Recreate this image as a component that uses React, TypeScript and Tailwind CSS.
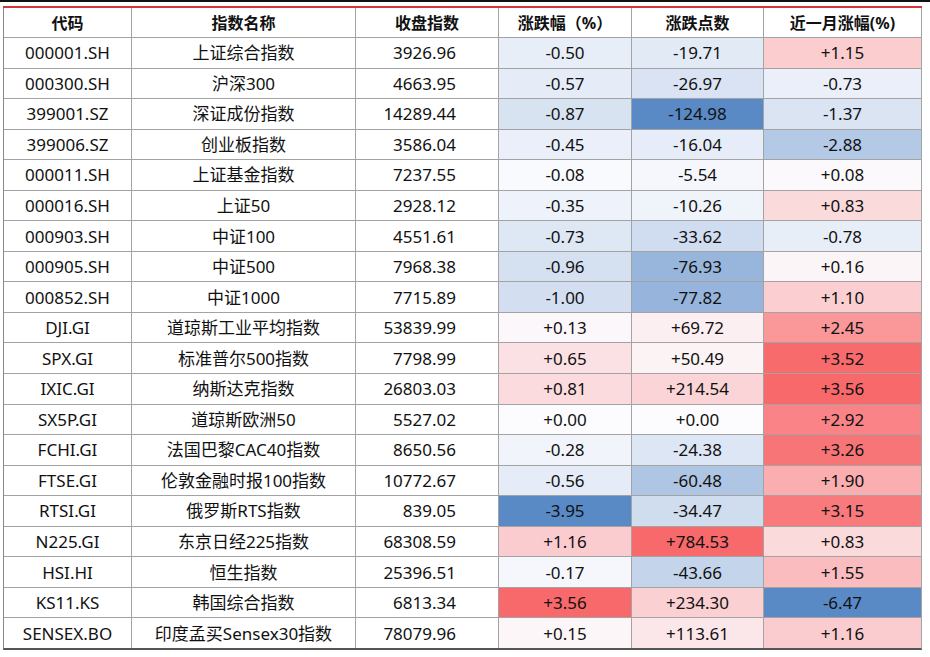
import React from "react";

type Row = [string, string, string, number, number, number];

const rows: Row[] = [
  ["000001.SH", "上证综合指数", "3926.96", -0.5, -19.71, 1.15],
  ["000300.SH", "沪深300", "4663.95", -0.57, -26.97, -0.73],
  ["399001.SZ", "深证成份指数", "14289.44", -0.87, -124.98, -1.37],
  ["399006.SZ", "创业板指数", "3586.04", -0.45, -16.04, -2.88],
  ["000011.SH", "上证基金指数", "7237.55", -0.08, -5.54, 0.08],
  ["000016.SH", "上证50", "2928.12", -0.35, -10.26, 0.83],
  ["000903.SH", "中证100", "4551.61", -0.73, -33.62, -0.78],
  ["000905.SH", "中证500", "7968.38", -0.96, -76.93, 0.16],
  ["000852.SH", "中证1000", "7715.89", -1.0, -77.82, 1.1],
  ["DJI.GI", "道琼斯工业平均指数", "53839.99", 0.13, 69.72, 2.45],
  ["SPX.GI", "标准普尔500指数", "7798.99", 0.65, 50.49, 3.52],
  ["IXIC.GI", "纳斯达克指数", "26803.03", 0.81, 214.54, 3.56],
  ["SX5P.GI", "道琼斯欧洲50", "5527.02", 0.0, 0.0, 2.92],
  ["FCHI.GI", "法国巴黎CAC40指数", "8650.56", -0.28, -24.38, 3.26],
  ["FTSE.GI", "伦敦金融时报100指数", "10772.67", -0.56, -60.48, 1.9],
  ["RTSI.GI", "俄罗斯RTS指数", "839.05", -3.95, -34.47, 3.15],
  ["N225.GI", "东京日经225指数", "68308.59", 1.16, 784.53, 0.83],
  ["HSI.HI", "恒生指数", "25396.51", -0.17, -43.66, 1.55],
  ["KS11.KS", "韩国综合指数", "6813.34", 3.56, 234.3, -6.47],
  ["SENSEX.BO", "印度孟买Sensex30指数", "78079.96", 0.15, 113.61, 1.16],
];

const MIN = [90, 138, 198];
const MID = [252, 252, 255];
const MAX = [248, 105, 107];

function heat(v: number, lo: number, hi: number): string {
  let t = 0;
  let target = MID;
  if (v < 0) {
    t = v / lo;
    target = MIN;
  } else if (v > 0) {
    t = v / hi;
    target = MAX;
  }
  const c = MID.map((m, i) => Math.round(m + (target[i] - m) * t));
  return `rgb(${c[0]},${c[1]},${c[2]})`;
}

function fmt(v: number): string {
  return (v >= 0 ? "+" : "") + v.toFixed(2);
}

const cols = [3, 4, 5] as const;
const ranges = cols.map((ci) => {
  const vals = rows.map((r) => r[ci] as number);
  return [Math.min(...vals), Math.max(...vals)];
});

const headers = ["代码", "指数名称", "收盘指数", "涨跌幅（%）", "涨跌点数", "近一月涨幅(%)"];

export default function App() {
  return (
    <div
      className="w-[930px] h-[657px] bg-white overflow-hidden text-[#111]"
      style={{ fontFamily: '"Noto Sans", "Noto Sans CJK SC", sans-serif' }}
    >
      <div className="h-[2px] bg-[#111]" />
      <div className="ml-[3px] mt-[4px] w-[919px]">
        <div className="h-[2px] bg-[#d6333e]" />
        <div className="grid grid-cols-[127px_223px_142px_132px_131px_157px] grid-rows-[29px_repeat(20,29.56px)] gap-px bg-[#a3a3a3] border-l border-r border-l-[#8a8a8a] border-r-[#a3a3a3] border-b-2 border-b-[#555]">
          {headers.map((h) => (
            <div key={h} className="bg-white flex items-center justify-center font-bold text-[16px] leading-none">
              {h}
            </div>
          ))}
          {rows.map((r) => (
            <React.Fragment key={r[0]}>
              <div className="bg-white flex items-center justify-center text-[17px] leading-none">{r[0]}</div>
              <div className="bg-white flex items-center justify-center text-[17px] leading-none">{r[1]}</div>
              <div className="bg-white flex items-center justify-end pr-[42px] text-[17px] leading-none">{r[2]}</div>
              {cols.map((ci, k) => (
                <div
                  key={ci}
                  className="flex items-center justify-center text-[17px] leading-none"
                  style={{ backgroundColor: heat(r[ci] as number, ranges[k][0], ranges[k][1]) }}
                >
                  {fmt(r[ci] as number)}
                </div>
              ))}
            </React.Fragment>
          ))}
        </div>
      </div>
    </div>
  );
}
